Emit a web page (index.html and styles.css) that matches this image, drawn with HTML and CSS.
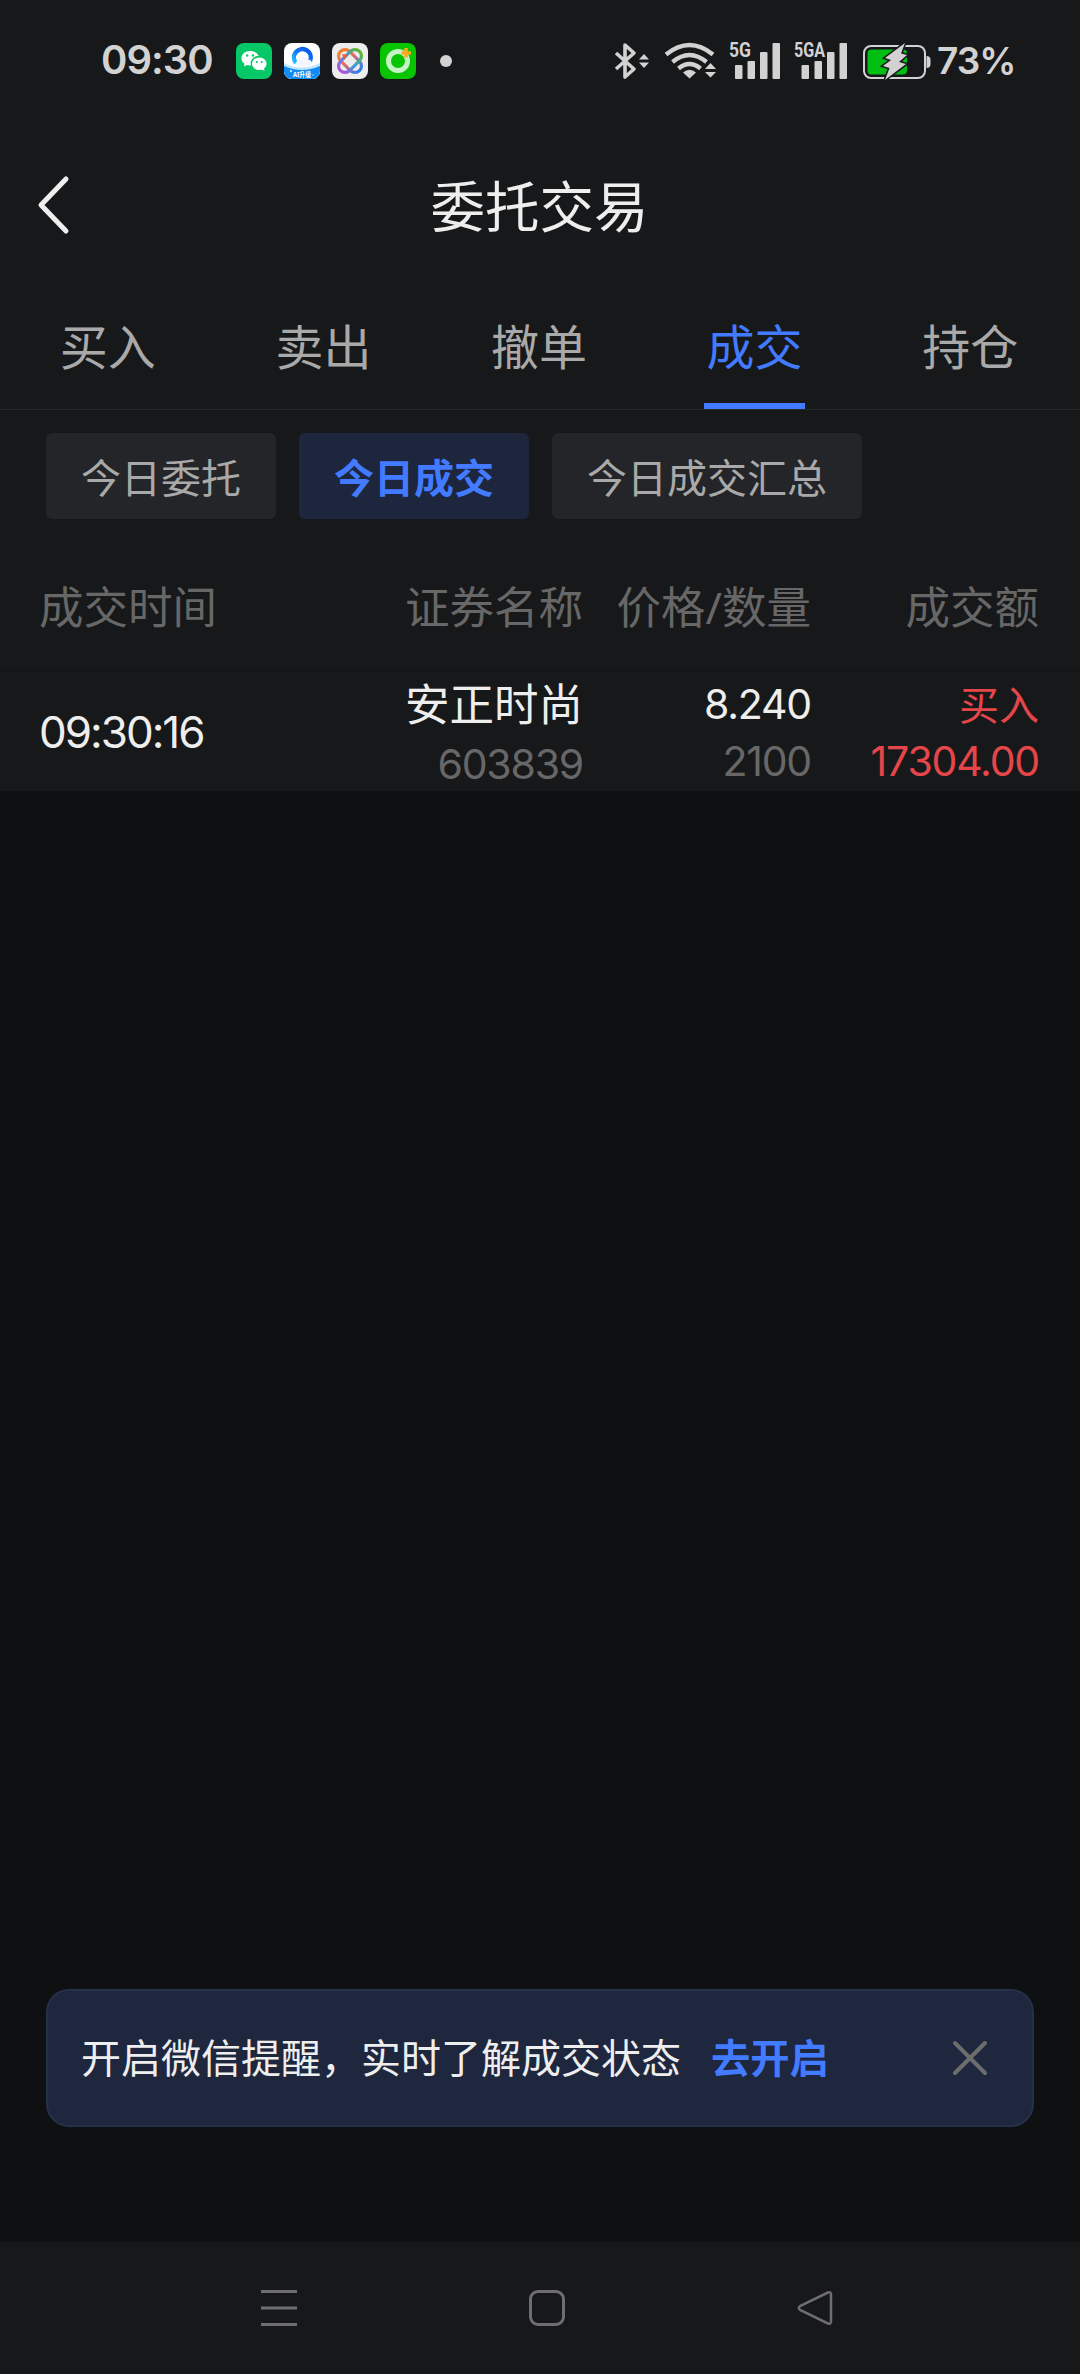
FILE: index.html
```html
<!DOCTYPE html>
<html lang="zh-CN">
<head>
  <meta charset="UTF-8">
  <meta name="viewport" content="width=device-width, initial-scale=1.0">
  <title>委托交易</title>
  <link rel="stylesheet" href="styles.css">
</head>
<body>

  <div class="status-bar">
    <span class="clock">09:30</span>
    <div class="app-icons">
      <svg class="app-icon" viewBox="0 0 36 36">
        <rect width="36" height="36" rx="8" fill="#07c866"/>
        <path d="M14 8c-5 0-8.500 3.200-8.500 7.200 0 2.300 1.200 4.200 3.100 5.500L8 23.500l3-1.600c1 .3 2 .5 3 .5h1c-1.500-5 2.500-9.300 7.600-9.300C21.800 10 18.300 8 14 8z" fill="#fff"/>
        <ellipse cx="23.300" cy="20.700" rx="7.300" ry="6.300" fill="#fff"/>
        <path d="M25 26l3.500 2-.8-3.500z" fill="#fff"/>
        <g fill="#07c866"><circle cx="11.200" cy="12.500" r="1.200"/><circle cx="17" cy="12.500" r="1.200"/><circle cx="20.800" cy="19" r="1"/><circle cx="25.700" cy="19" r="1"/></g>
      </svg>
      <svg class="app-icon" viewBox="0 0 36 36">
        <defs>
          <linearGradient id="ring" x1="0" y1="1" x2="1" y2="0"><stop offset="0" stop-color="#29c5ff"/><stop offset=".5" stop-color="#1477f5"/><stop offset="1" stop-color="#0b57e0"/></linearGradient>
          <clipPath id="tile"><rect width="36" height="36" rx="8"/></clipPath>
        </defs>
        <g clip-path="url(#tile)">
          <rect width="36" height="36" fill="#fff"/>
          <path d="M0 20q18 9 36 0v16H0z" fill="#bfe6ff"/>
          <path d="M0 23q18 8 36 0v13H0z" fill="#118cf5"/>
          <path d="M12 20a8.400 8.400 0 1 1 14-2" fill="none" stroke="url(#ring)" stroke-width="4.500"/>
          <path d="M14 23a3.500 3.500 0 0 1 1-6.500 5 5 0 0 1 9 0 3.500 3.500 0 0 1 2 6.500z" fill="#f2f7ff"/>
          <text class="badge-text" x="9" y="34" textLength="18" lengthAdjust="spacingAndGlyphs">AI升级</text>
          <circle cx="7" cy="28" r="1" fill="#fff"/><circle cx="29" cy="32" r=".8" fill="#9fd6ff"/>
        </g>
      </svg>
      <svg class="app-icon" viewBox="0 0 36 36">
        <defs>
          <linearGradient id="loopA" x1="0" y1="0" x2="1" y2="0" gradientTransform="rotate(90 .5 .5)"><stop offset="0" stop-color="#f5822b"/><stop offset=".4" stop-color="#ef6b60"/><stop offset="1" stop-color="#2f7ff0"/></linearGradient>
          <linearGradient id="loopB" x1="0" y1="0" x2="0" y2="1"><stop offset="0" stop-color="#5cb531"/><stop offset=".5" stop-color="#3a9be0"/><stop offset="1" stop-color="#b052dc"/></linearGradient>
        </defs>
        <rect width="36" height="36" rx="8" fill="#ededee"/>
        <g fill="none" stroke-width="3.200">
          <rect x="11.500" y="4.500" width="13" height="27" rx="6.500" transform="rotate(-45 18 18)" stroke="url(#loopA)"/>
          <rect x="11.500" y="4.500" width="13" height="27" rx="6.500" transform="rotate(45 18 18)" stroke="url(#loopB)"/>
        </g>
        <path d="M10 11l6 1-4 5z" fill="#f05a3c"/>
      </svg>
      <svg class="app-icon" viewBox="0 0 36 36">
        <rect width="36" height="36" rx="8" fill="#09c400"/>
        <circle cx="18" cy="18" r="9.500" fill="none" stroke="#c5f3c7" stroke-width="5"/>
        <path d="M26 5v9.500M21.500 10H31" stroke="#ffa81c" stroke-width="3.500"/>
      </svg>
    </div>
    <span class="dot"></span>

    <div class="signals">
      <svg class="bluetooth" width="36" height="40" viewBox="0 0 36 40">
        <path d="M2 12l18 16-9 8V4l9 8L2 28" fill="none" stroke="#d2d2d2" stroke-width="3.600" stroke-linejoin="round"/>
        <path d="M25 18.500l5-5.500 5 5.500zM25 21.500h10l-5 5.500z" fill="#d2d2d2"/>
      </svg>
      <svg class="wifi" width="52" height="40" viewBox="0 0 52 40">
        <g fill="none" stroke="#d2d2d2" stroke-width="4.400">
          <path d="M2 13.500Q25.500-5.500 49 13.500"/>
          <path d="M8.500 21Q25.500 7 42.500 21"/>
          <path d="M14.500 27.500Q25.500 18.500 36.500 27.500"/>
        </g>
        <path d="M19 31.500q6.500-5.500 13 0l-6.500 6z" fill="#d2d2d2"/>
        <path d="M41 28l5.500-6 5.500 6zM41 31h11l-5.500 5.500z" fill="#d2d2d2"/>
      </svg>
      <svg class="cell" width="52" height="40" viewBox="0 0 52 40">
        <text class="net" x="0" y="16" textLength="22" lengthAdjust="spacingAndGlyphs">5G</text>
        <g fill="#d2d2d2"><rect x="6" y="24" width="7.500" height="14" rx="1"/><rect x="18.500" y="20" width="7.500" height="18" rx="1"/><rect x="31" y="11" width="7.500" height="27" rx="1"/><rect x="43.500" y="2" width="7.500" height="36" rx="1"/></g>
      </svg>
      <svg class="cell" width="54" height="40" viewBox="0 0 54 40">
        <text class="net" x="0" y="16" textLength="31" lengthAdjust="spacingAndGlyphs">5GA</text>
        <g fill="#d2d2d2"><rect x="7.500" y="24" width="7.500" height="14" rx="1"/><rect x="20.500" y="20" width="7.500" height="18" rx="1"/><rect x="33" y="11" width="7.500" height="27" rx="1"/><rect x="45.500" y="2" width="7.500" height="36" rx="1"/></g>
      </svg>
      <svg class="battery" width="68" height="40" viewBox="0 0 68 40">
        <rect x="1" y="5" width="61" height="32" rx="7" fill="none" stroke="#d2d2d2" stroke-width="2"/>
        <rect x="4.500" y="8.500" width="39.500" height="25" rx="4" fill="#02be12"/>
        <path d="M63.500 15q4 0 4 4v4q0 4-4 4z" fill="#d2d2d2"/>
        <path d="M42 2L22 17l6 2-8 6 6.500 2L22 39l21-16-7-2 8-7-6-1.500z" fill="#d2d2d2" stroke="#17181a" stroke-width="3" paint-order="stroke"/>
      </svg>
      <span class="percent">73%</span>
    </div>
  </div>

  <header class="title-bar">
    <svg class="back" width="34" height="60" viewBox="0 0 34 60">
      <path d="M31 3L6 29l25 26" fill="none" stroke="#eee" stroke-width="5" stroke-linecap="round" stroke-linejoin="round"/>
    </svg>
    <h1>委托交易</h1>
  </header>

  <nav class="tabs">
    <a class="tab">买入</a>
    <a class="tab">卖出</a>
    <a class="tab">撤单</a>
    <a class="tab active">成交</a>
    <a class="tab">持仓</a>
  </nav>

  <div class="filters">
    <button class="chip">今日委托</button>
    <button class="chip active">今日成交</button>
    <button class="chip">今日成交汇总</button>
  </div>

  <section class="deals">
    <div class="row head">
      <span>成交时间</span>
      <span>证券名称</span>
      <span>价格/数量</span>
      <span>成交额</span>
    </div>
    <div class="row deal">
      <span class="num time">09:30:16</span>
      <div class="cell-stack stock">
        <span class="name">安正时尚</span>
        <span class="num code">603839</span>
      </div>
      <div class="cell-stack">
        <span class="num">8.240</span>
        <span class="num muted">2100</span>
      </div>
      <div class="cell-stack buy">
        <span class="side">买入</span>
        <span class="num">17304.00</span>
      </div>
    </div>
  </section>

  <main class="empty"></main>

  <div class="notice">
    <span>开启微信提醒，实时了解成交状态</span>
    <a class="notice-link">去开启</a>
    <svg class="close" width="38" height="38" viewBox="0 0 38 38">
      <path d="M4 4l30 30M34 4L4 34" stroke="#6d6d6d" stroke-width="4" stroke-linecap="round"/>
    </svg>
  </div>

  <footer class="system-nav">
    <svg width="36" height="36" viewBox="0 0 36 36">
      <path d="M0 1.500h36M0 18h36M0 34.500h36" stroke="#6e6e70" stroke-width="3"/>
    </svg>
    <svg width="36" height="36" viewBox="0 0 36 36">
      <rect x="1.500" y="1.500" width="33" height="33" rx="7.500" fill="none" stroke="#6e6e70" stroke-width="3"/>
    </svg>
    <svg width="36" height="36" viewBox="0 0 36 36">
      <path d="M31 2.500L3.500 15.800q-3.500 2.200 0 4.400L31 33.500q3 1 3-2v-27q0-3-3-2z" fill="none" stroke="#6e6e70" stroke-width="2.500"/>
    </svg>
  </footer>

</body>
</html>
```
FILE: styles.css
```css
* {
  box-sizing: border-box;
}

body {
  margin: 0;
  min-height: 2374px;
  display: flex;
  flex-direction: column;
  font-family: "Noto Sans", "Noto Sans CJK SC", sans-serif;
  background: #0f1012;
  color: #eee;
}

svg {
  display: block;
  flex: none;
  overflow: visible;
}

/* System status bar */
.status-bar {
  height: 122px;
  padding: 0 66px 0 101px;
  display: flex;
  align-items: center;
  background: #17181a;
  color: #d2d2d2;
}

.clock {
  width: 135px;
  padding-bottom: 2px;
  font-family: Inter, sans-serif;
  font-size: 40px;
  line-height: 40px;
  font-weight: 600;
  letter-spacing: -1px;
}

.app-icons {
  display: flex;
  gap: 12px;
}

.app-icon {
  width: 36px;
  height: 36px;
}

.badge-text {
  font-size: 7px;
  font-weight: 700;
  fill: #fff;
}

.dot {
  width: 12px;
  height: 12px;
  margin-left: 24px;
  border-radius: 50%;
  background: #d2d2d2;
}

.signals {
  display: flex;
  align-items: center;
  margin-left: auto;
}

.wifi {
  margin-left: 14px;
}

.cell {
  margin-left: 13px;
}

.battery {
  margin-left: 15px;
}

.net {
  font-family: Roboto, sans-serif;
  font-size: 21px;
  font-weight: 700;
  fill: #d2d2d2;
}

.percent {
  width: 77px;
  margin-left: 6px;
  font-family: Inter, sans-serif;
  font-size: 37px;
  line-height: 38px;
  font-weight: 600;
  letter-spacing: -1px;
}

/* Page title */
.title-bar {
  height: 168px;
  padding: 0 36px 0 35px;
  display: grid;
  grid-template-columns: 60px 1fr 60px;
  align-items: center;
  background: #17181a;
}

h1 {
  margin: 0;
  font-size: 54.5px;
  line-height: 60px;
  font-weight: 400;
  text-align: center;
}

/* Tabs */
.tabs {
  height: 120px;
  padding-right: 2px;
  display: flex;
  background: #17181a;
  border-bottom: 1px solid #27282b;
}

.tab {
  flex: 1;
  display: flex;
  flex-direction: column;
  align-items: center;
  padding-top: 27px;
  font-size: 48px;
  line-height: 60px;
  color: #a9a9a9;
}

.tab.active {
  color: #427bff;
}

.tab.active::after {
  content: "";
  width: 101px;
  height: 6px;
  margin-top: auto;
  background: #427bff;
}

/* Filter chips */
.filters {
  display: flex;
  gap: 23px;
  padding: 23px 46px 22px;
  background: #17181a;
}

.chip {
  height: 86px;
  padding: 3px 35px 0;
  border: none;
  border-radius: 6px;
  background: #242528;
  color: #a9a9a9;
  font-family: inherit;
  font-size: 40px;
  line-height: 60px;
}

.chip.active {
  background: #1d263d;
  color: #427bff;
  font-weight: 700;
}

/* Deals table */
.row {
  display: grid;
  grid-template-columns: 316px repeat(3, 228px);
  padding-left: 39px;
  text-align: right;
  background: #17181a;
}

.row > :first-child {
  text-align: left;
}

.head {
  height: 130px;
  padding-top: 36px;
  border-bottom: 1px solid #111214;
  font-size: 44.5px;
  line-height: 60px;
  color: #676767;
}

.deal {
  height: 120px;
}

.num {
  font-family: Inter, sans-serif;
  font-size: 41px;
  letter-spacing: -1.2px;
}

.time {
  padding-top: 31px;
  font-size: 44px;
  line-height: 60px;
  letter-spacing: -2px;
}

.cell-stack {
  display: flex;
  flex-direction: column;
  line-height: 57px;
  padding-top: 5px;
}

.stock {
  line-height: 60px;
  padding-top: 3px;
}

.name {
  font-size: 44.5px;
}

.code,
.muted {
  color: #676767;
}

.buy {
  color: #e5464a;
}

.side {
  font-size: 40px;
}

.empty {
  flex: 1;
}

/* Reminder banner */
.notice {
  height: 138px;
  margin: 0 46px 115px;
  padding: 0 43px 0 33px;
  display: flex;
  align-items: center;
  border: 2px solid #253049;
  border-radius: 23px;
  background: #1e273e;
  font-size: 40px;
  line-height: 60px;
}

.notice-link {
  margin-left: 30px;
  font-size: 39.3px;
  font-weight: 700;
  color: #427bff;
}

.close {
  margin-left: auto;
}

/* System navigation */
.system-nav {
  height: 132px;
  padding: 48px 247px 0 261px;
  display: flex;
  justify-content: space-between;
  background: #17181a;
}
```
